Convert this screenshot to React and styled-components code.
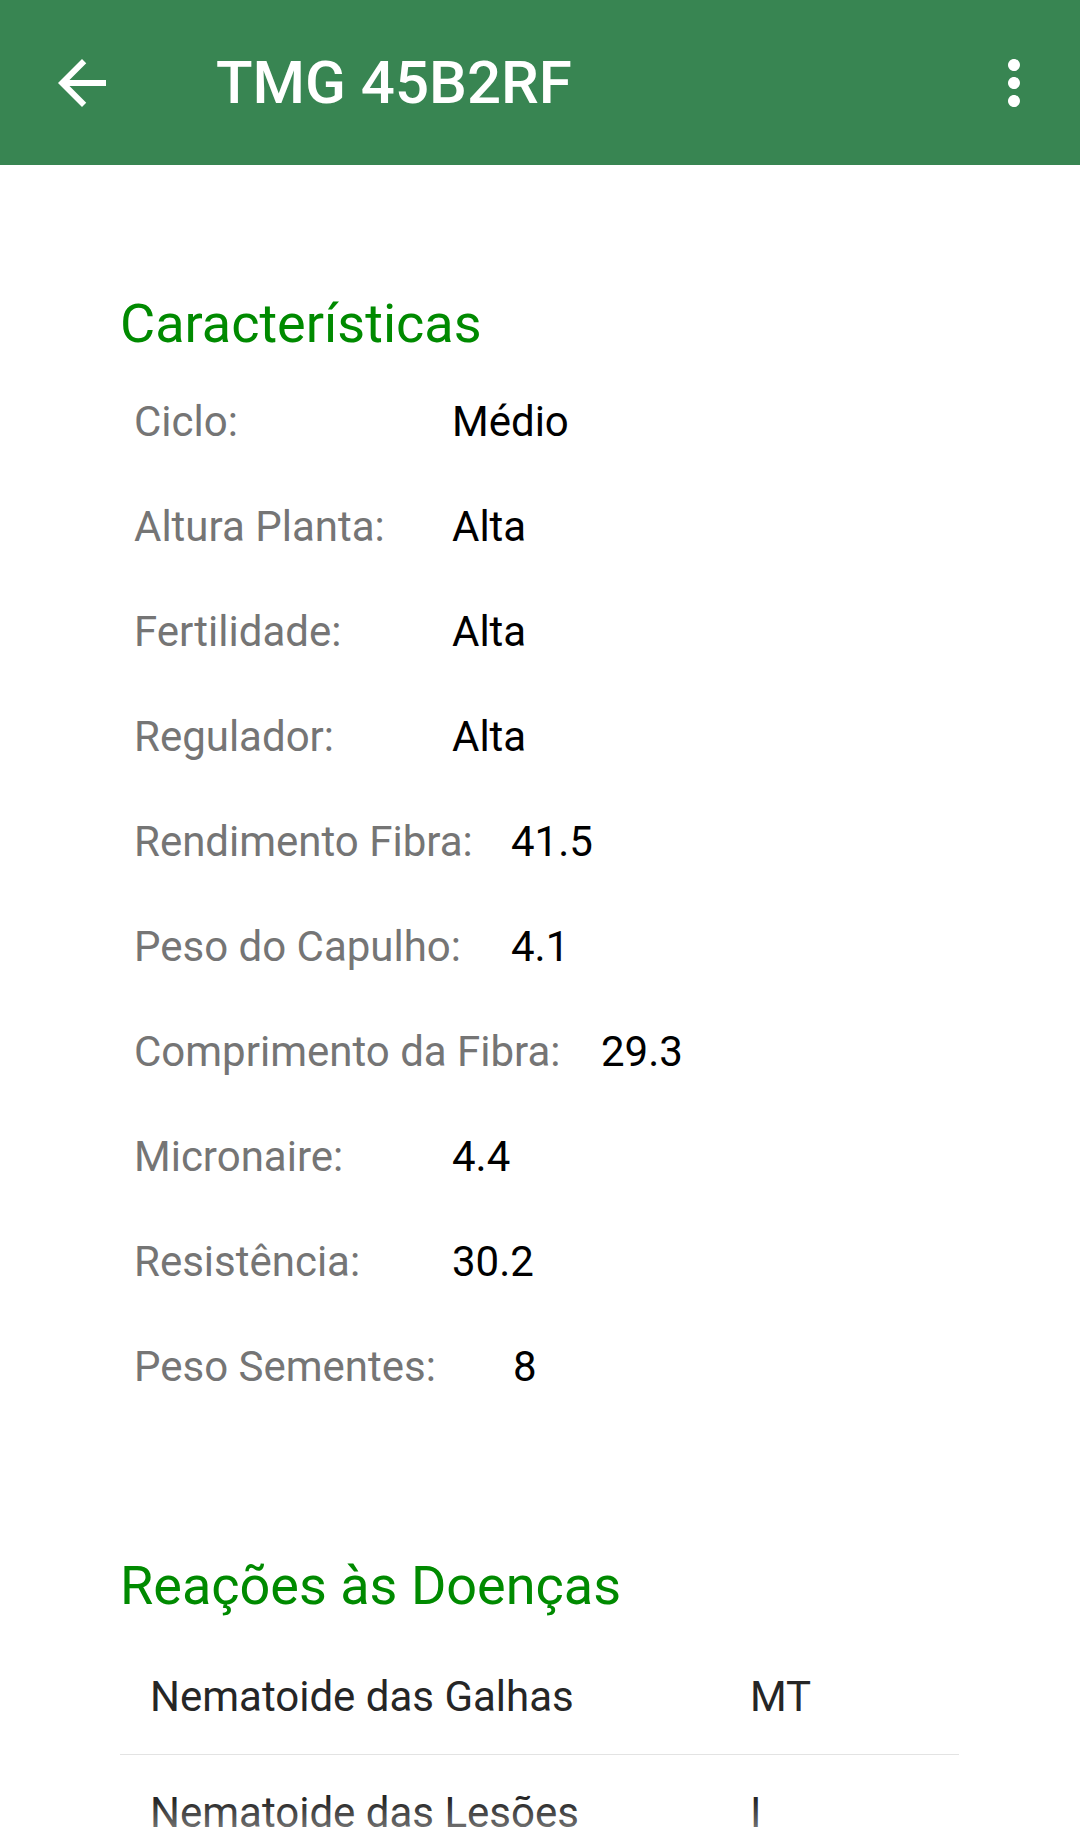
import React from "react";
import styled, { createGlobalStyle } from "styled-components";

const Global = createGlobalStyle`
  html, body { margin: 0; padding: 0; background: #ffffff; }
  body { font-family: Roboto, "Noto Sans", "Liberation Sans", sans-serif; }
  * { box-sizing: border-box; }
`;

const Screen = styled.div`
  position: relative;
  height: 100vh;
  overflow: hidden;
  background: #ffffff;
`;

const Toolbar = styled.header`
  height: 165px;
  background: #388552;
  display: flex;
  align-items: center;
  padding: 0 30px 0 46px;
`;

const IconButton = styled.div`
  width: 72px;
  height: 72px;
  display: flex;
  align-items: center;
  justify-content: center;
  flex: none;
  svg { width: 72px; height: 72px; fill: #ffffff; display: block; }
`;

const Title = styled.h1`
  margin: 0 0 0 98px;
  flex: 1;
  font-size: 60px;
  line-height: 1;
  font-weight: 500;
  color: #ffffff;
  letter-spacing: 0;
`;

const Content = styled.main`
  display: flex;
  flex-direction: column;
`;

const SectionTitle = styled.h2`
  margin: ${(p) => p.$top}px 0 0 120px;
  font-size: 54px;
  line-height: 1;
  font-weight: 400;
  color: #008a00;
`;

const SpecList = styled.div`
  display: flex;
  flex-direction: column;
  margin-top: 18px;
  padding-left: 134px;
`;

const SpecRow = styled.div`
  display: flex;
  height: 105px;
  line-height: 105px;
  font-size: 42px;
`;

const SpecLabel = styled.span`
  width: ${(p) => p.$w}px;
  flex: none;
  color: #757575;
`;

const SpecValue = styled.span`
  color: #000000;
`;

const DiseaseTable = styled.div`
  margin: 26px 0 0 120px;
  width: 839px;
  display: flex;
  flex-direction: column;
`;

const DiseaseRow = styled.div`
  display: grid;
  grid-template-columns: 600px 1fr;
  height: 116px;
  align-items: center;
  padding-left: 30px;
  font-size: 42px;
  line-height: 1.17;
  color: #262626;
  border-bottom: 1px solid #e3e3e3;
`;

const BottomFade = styled.div`
  position: absolute;
  left: 0;
  right: 0;
  bottom: 0;
  height: 45px;
  background: linear-gradient(rgba(255,255,255,0), rgba(255,255,255,0.55));
  pointer-events: none;
`;

const specs = [
  ["Ciclo:", "Médio", 318],
  ["Altura Planta:", "Alta", 318],
  ["Fertilidade:", "Alta", 318],
  ["Regulador:", "Alta", 318],
  ["Rendimento Fibra:", "41.5", 377],
  ["Peso do Capulho:", "4.1", 377],
  ["Comprimento da Fibra:", "29.3", 467],
  ["Micronaire:", "4.4", 318],
  ["Resistência:", "30.2", 318],
  ["Peso Sementes:", "8", 379],
];

const diseases = [
  ["Nematoide das Galhas", "MT"],
  ["Nematoide das Lesões", "I"],
];

export default function App() {
  return (
    <Screen>
      <Global />
      <Toolbar>
        <IconButton>
          <svg viewBox="0 0 24 24">
            <path d="M20 11H7.83l5.59-5.59L12 4l-8 8 8 8 1.41-1.41L7.83 13H20v-2z" />
          </svg>
        </IconButton>
        <Title>TMG 45B2RF</Title>
        <IconButton>
          <svg viewBox="0 0 24 24">
            <path d="M12 8c1.1 0 2-.9 2-2s-.9-2-2-2-2 .9-2 2 .9 2 2 2zm0 2c-1.1 0-2 .9-2 2s.9 2 2 2 2-.9 2-2-.9-2-2-2zm0 6c-1.1 0-2 .9-2 2s.9 2 2 2 2-.9 2-2-.9-2-2-2z" />
          </svg>
        </IconButton>
      </Toolbar>
      <Content>
        <SectionTitle $top={132}>Características</SectionTitle>
        <SpecList>
          {specs.map(([label, value, w]) => (
            <SpecRow key={label}>
              <SpecLabel $w={w}>{label}</SpecLabel>
              <SpecValue>{value}</SpecValue>
            </SpecRow>
          ))}
        </SpecList>
        <SectionTitle $top={140}>Reações às Doenças</SectionTitle>
        <DiseaseTable>
          {diseases.map(([name, value]) => (
            <DiseaseRow key={name}>
              <span>{name}</span>
              <span>{value}</span>
            </DiseaseRow>
          ))}
        </DiseaseTable>
      </Content>
      <BottomFade />
    </Screen>
  );
}
